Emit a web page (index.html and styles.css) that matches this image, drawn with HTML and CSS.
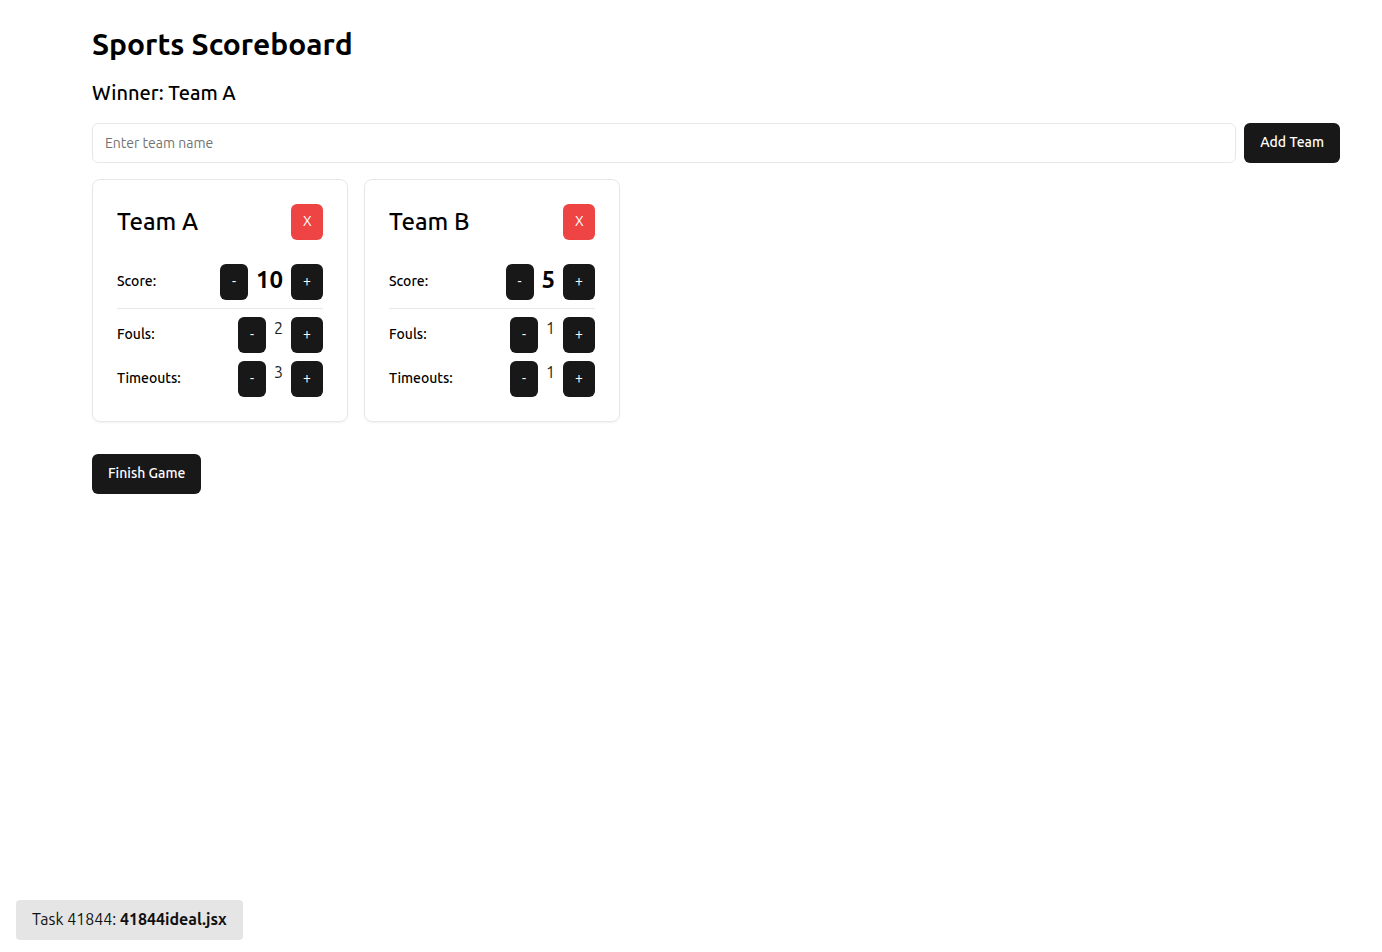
FILE: index.html
```html
<!DOCTYPE html>
<html lang="en">
<head>
<meta charset="utf-8">
<title>Sports Scoreboard</title>
<link rel="stylesheet" href="styles.css">
</head>
<body>
<div class="app">
  <h1 class="title">Sports Scoreboard</h1>
  <h2 class="winner">Winner: Team A</h2>
  <div class="add-row">
    <input class="team-input" type="text" placeholder="Enter team name">
    <button class="btn btn-dark btn-lg">Add Team</button>
  </div>
  <div class="cards">
    <div class="card">
      <div class="card-head">
        <h3 class="team-name">Team A</h3>
        <button class="btn btn-red">X</button>
      </div>
      <div class="stats">
        <div class="stat stat-score">
          <span class="label">Score:</span>
          <div class="controls">
            <button class="btn btn-dark">-</button>
            <span class="score">10</span>
            <button class="btn btn-dark">+</button>
          </div>
        </div>
        <div class="stat">
          <span class="label">Fouls:</span>
          <div class="controls">
            <button class="btn btn-dark">-</button>
            <span class="value">2</span>
            <button class="btn btn-dark">+</button>
          </div>
        </div>
        <div class="stat">
          <span class="label">Timeouts:</span>
          <div class="controls">
            <button class="btn btn-dark">-</button>
            <span class="value">3</span>
            <button class="btn btn-dark">+</button>
          </div>
        </div>
      </div>
    </div>
    <div class="card">
      <div class="card-head">
        <h3 class="team-name">Team B</h3>
        <button class="btn btn-red">X</button>
      </div>
      <div class="stats">
        <div class="stat stat-score">
          <span class="label">Score:</span>
          <div class="controls">
            <button class="btn btn-dark">-</button>
            <span class="score">5</span>
            <button class="btn btn-dark">+</button>
          </div>
        </div>
        <div class="stat">
          <span class="label">Fouls:</span>
          <div class="controls">
            <button class="btn btn-dark">-</button>
            <span class="value">1</span>
            <button class="btn btn-dark">+</button>
          </div>
        </div>
        <div class="stat">
          <span class="label">Timeouts:</span>
          <div class="controls">
            <button class="btn btn-dark">-</button>
            <span class="value">1</span>
            <button class="btn btn-dark">+</button>
          </div>
        </div>
      </div>
    </div>
  </div>
  <button class="btn btn-dark btn-lg">Finish Game</button>
</div>
<div class="task-badge">Task 41844: <b>41844ideal.jsx</b></div>
</body>
</html>
```

FILE: styles.css
```css
* { box-sizing: border-box; }
html, body { margin: 0; padding: 0; background: #fff; }
body {
  font-family: "Ubuntu", "Noto Sans", "Open Sans", sans-serif;
  color: #000;
}
.app {
  padding: 26px 42px 16px 92px;
  display: flex;
  flex-direction: column;
  align-items: flex-start;
}
.title {
  margin: 0 0 17px;
  font-size: 30px;
  line-height: 36px;
  font-weight: 700;
}
.winner {
  margin: 0 0 16px;
  font-size: 20px;
  line-height: 28px;
  font-weight: 500;
}
.add-row {
  display: flex;
  gap: 8px;
  width: 100%;
  margin-bottom: 16px;
}
.team-input {
  flex: 1;
  height: 40px;
  border: 1px solid #e5e7eb;
  border-radius: 6px;
  padding: 0 12px;
  font-family: inherit;
  font-size: 14px;
  color: #000;
  outline: none;
}
.team-input::placeholder { color: #737373; }
.btn {
  border: none;
  font-family: inherit;
  font-size: 14px;
  line-height: 20px;
  padding: 7px 12px 9px;
  border-radius: 6px;
  cursor: pointer;
}
.btn-dark { background: #181818; color: #fff; }
.btn-red { background: #ef4444; color: #fff; padding-left: 11.5px; padding-right: 11.5px; }
.btn-lg {
  padding: 9px 16px 11px;
  font-weight: 500;
}
.cards {
  display: flex;
  flex-wrap: wrap;
  gap: 16px;
  margin-bottom: 32px;
}
.card {
  width: 256px;
  border: 1px solid #e5e7eb;
  border-radius: 8px;
  padding: 24px;
  box-shadow: 0 1px 2px rgba(0,0,0,0.05);
}
.card-head {
  display: flex;
  justify-content: space-between;
  align-items: center;
  margin-bottom: 24px;
}
.team-name {
  margin: 0;
  font-size: 24px;
  line-height: 32px;
  font-weight: 500;
}
.stats {
  display: flex;
  flex-direction: column;
  gap: 8px;
}
.stat {
  display: flex;
  justify-content: space-between;
  align-items: center;
}
.stat-score {
  padding-bottom: 8px;
  border-bottom: 1px solid #e5e7eb;
}
.label {
  font-size: 14px;
  line-height: 20px;
  font-weight: 500;
  margin-top: -2px;
}
.controls {
  display: flex;
  gap: 8px;
}
.score {
  font-size: 24px;
  line-height: 32px;
  font-weight: 700;
}
.value {
  font-size: 16px;
  line-height: 22px;
  color: #1f1f1f;
}
.task-badge {
  position: fixed;
  left: 16px;
  bottom: 12px;
  background: #e5e5e5;
  border-radius: 4px;
  padding: 7px 16px 9px;
  font-size: 16px;
  line-height: 24px;
  color: #111;
}
.task-badge b { font-weight: 700; }
```
